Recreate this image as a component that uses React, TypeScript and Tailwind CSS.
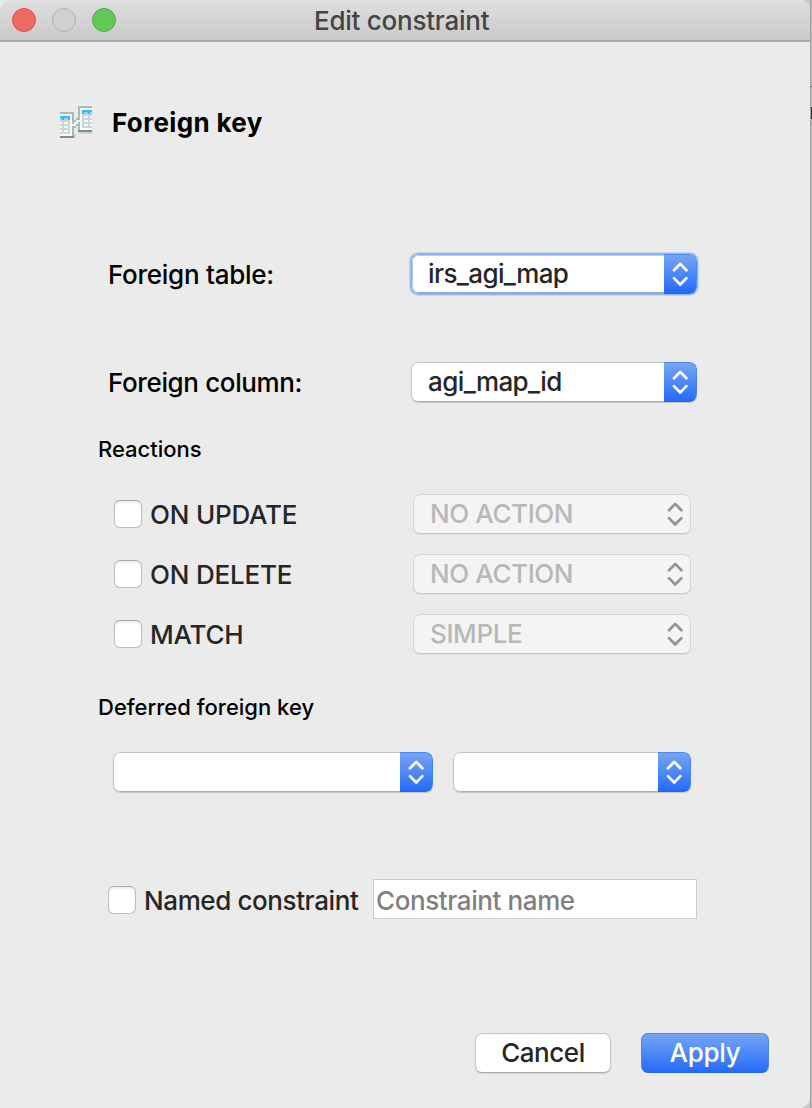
import type { ReactNode } from "react";

function Arrows({ className }: { className: string }) {
  return (
    <svg className={className} width="16" height="24" viewBox="0 0 16 24" fill="none" stroke="currentColor" strokeWidth="2.7" strokeLinecap="round" strokeLinejoin="round">
      <path d="M2 8.300 8.200 1.900l6.200 6.400M2 16.100l6.200 6.400 6.200-6.400" />
    </svg>
  );
}

function Select({ children, className = "", focused = false }: { children?: ReactNode; className?: string; focused?: boolean }) {
  return (
    <div
      className={`flex h-10 overflow-hidden rounded-[7px] bg-white ${className} ${
        focused ? "shadow-[0_0_0_1.5px_#98bdec]" : "shadow-[0_1px_1px_rgba(0,0,0,0.18)]"
      }`}
    >
      <div
        className={`flex flex-1 items-center rounded-l-[7px] border border-r-0 pl-4 tracking-[-0.6px] ${
          focused ? "border-[#82aadf] shadow-[inset_0_1px_0_#b4d2f6,inset_1px_0_0_#b4d2f6,inset_0_-1px_0_#8fb3e2]" : "border-[#c4c4c4] border-b-[#adadad]"
        }`}
      >
        {children}
      </div>
      <div className="flex w-[33px] items-center justify-center rounded-r-[7px] border border-l-0 border-[#4b87f2] border-b-[#2165ed] bg-linear-to-b from-[#76a4f4] to-[#236af8]">
        <Arrows className="text-white" />
      </div>
    </div>
  );
}

function DisabledSelect({ children }: { children: ReactNode }) {
  return (
    <div className="flex h-10 w-[278px] items-center justify-between rounded-[7px] border border-[#d5d5d5] border-b-[#c6c6c6] bg-[#f4f4f4] pr-[7.5px] pl-4 tracking-[-0.4px] text-[#b8b8b8] shadow-[0_1px_1px_rgba(0,0,0,0.05)]">
      {children}
      <Arrows className="text-[#949494]" />
    </div>
  );
}

function Checkbox() {
  return (
    <div className="size-7 shrink-0 rounded-[6px] border border-[#bcbcbc] border-t-[#a9a9a9] bg-white shadow-[inset_0_2px_2px_rgba(0,0,0,0.07)]" />
  );
}

function ForeignKeyIcon() {
  return (
    <svg width="32" height="32" viewBox="0 0 16 16" shapeRendering="crispEdges">
      <path fill="#d2d4d4" d="M7 14h1v2H7zM9 13h7v1H9z" />
      <path fill="#a9b9b9" d="M0 3h7v12H0zM9 0h7v12H9z" />
      <path fill="#f4fbfb" d="M0 4h6v11H0zM10 1h6v11h-6z" />
      <path fill="#35b8f4" d="M0 5h5v2H0zM11 2h5v2h-5z" />
      <path fill="#7fdcfa" d="M0 6h1v1H0zM2 6h2v1H2zM12 3h2v1h-2zM15 3h1v1h-1z" />
      <path fill="#cbd9d8" d="M0 7h5v7H0zM11 4h5v7h-5z" />
      <path fill="#f4fbfb" d="M0 8h1v1H0zM2 8h2v1H2zM0 10h1v1H0zM2 10h2v1H2zM0 12h1v1H0zM2 12h2v1H2zM12 5h2v1h-2zM15 5h1v1h-1zM12 7h2v1h-2zM15 7h1v1h-1zM12 9h2v1h-2zM15 9h1v1h-1z" />
      <path fill="#7e8d8d" d="M0 15h7v1H0zM9 12h7v1H9z" />
      <path fill="#a9b9b9" d="M7 7h1v1H7zM8 6h1v1H8zM7 10h1v1H7zM8 9h1v1H8z" />
      <path fill="#f5f7f7" d="M6 9h2v1H6zM7 8h2v1H7zM8 7h2v1H8z" />
    </svg>
  );
}

export default function App() {
  return (
    <div className="flex h-[1108px] w-[812px] overflow-hidden bg-[#c9c9c9] font-['Inter',sans-serif] text-[26px] leading-8 font-[450] whitespace-nowrap text-[#262626]">
      <div className="flex w-[810px] flex-col rounded-tr-[10px] rounded-br-[10px] bg-[#ebebeb]">
        <header className="flex h-[42px] items-center rounded-t-[10px] border-b-2 border-[#a9a9a9] bg-linear-to-b from-[#dfdfdf] to-[#c9c9c9] pl-3">
          <div className="flex gap-4">
            <span className="size-6 rounded-full border border-[#d95548] bg-[#ed6b60]" />
            <span className="size-6 rounded-full border border-[#b1b1b1] bg-[#d0d0d0]" />
            <span className="size-6 rounded-full border border-[#4fab3c] bg-[#63c956]" />
          </div>
          <h1 className="ml-[198px] pt-0.5 tracking-[-0.25px] text-[#454545]">Edit constraint</h1>
        </header>

        <div className="mt-16 flex h-8 pl-[60px]">
          <ForeignKeyIcon />
          <h2 className="ml-5 pt-px font-bold tracking-[0.35px] text-black">Foreign key</h2>
        </div>

        <div className="mt-[116px] flex h-10 items-center pl-[108px]">
          <span className="w-[303px] pt-0.5 tracking-[-0.27px] text-black">Foreign table:</span>
          <Select className="w-[286px]" focused>irs_agi_map</Select>
        </div>
        <div className="mt-[68px] flex h-10 items-center pl-[108px]">
          <span className="w-[303px] pt-0.5 tracking-[-0.37px] text-black">Foreign column:</span>
          <Select className="w-[286px]">agi_map_id</Select>
        </div>

        <h3 className="mt-[31px] pl-[98px] text-[22px] leading-8 font-medium text-black">Reactions</h3>
        <div className="mt-[29px] flex flex-col gap-5 pl-[114px]">
          {[
            ["ON UPDATE", "NO ACTION"],
            ["ON DELETE", "NO ACTION"],
            ["MATCH", "SIMPLE"],
          ].map(([label, value]) => (
            <div key={label} className="flex h-10 items-center">
              <Checkbox />
              <span className="ml-2 w-[263px] pt-0.5 tracking-[-0.2px]">{label}</span>
              <DisabledSelect>{value}</DisabledSelect>
            </div>
          ))}
        </div>

        <h3 className="mt-[37px] pl-[98px] text-[22px] leading-8 font-medium text-black">Deferred foreign key</h3>
        <div className="mt-[29px] flex gap-5 pl-[113px]">
          <Select className="w-[320px]" />
          <Select className="w-[238px]" />
        </div>

        <div className="mt-[87px] flex h-10 items-center pl-[108px]">
          <div className="pt-0.5">
            <Checkbox />
          </div>
          <span className="ml-2 w-[229px] pt-1 tracking-[-0.4px]">Named constraint</span>
          <div className="flex h-10 w-[324px] items-center border border-[#cbcbcb] bg-white pt-1 pl-0.5 tracking-[-0.4px] text-[#808080]">Constraint name</div>
        </div>

        <div className="mt-[114px] flex gap-[30px] pl-[475px]">
          <button className="h-10 w-[136px] rounded-[7px] border border-[#c4c4c4] border-b-[#adadad] bg-white tracking-[-0.45px] shadow-[0_1px_1px_rgba(0,0,0,0.12)]">Cancel</button>
          <button className="h-10 w-[128px] rounded-[7px] border border-[#4b87f2] border-b-[#2165ed] bg-linear-to-b from-[#76a4f4] to-[#236af8] tracking-[-0.3px] text-white">Apply</button>
        </div>
      </div>
      <div className="flex w-0.5 flex-col border-l border-[#a3a3a3] bg-[#b7b7b7]">
        <span className="mt-[86px] h-px bg-[#555]" />
        <span className="mt-5 h-3 bg-[#333]" />
        <span className="mt-1 h-px bg-[#888]" />
      </div>
    </div>
  );
}
